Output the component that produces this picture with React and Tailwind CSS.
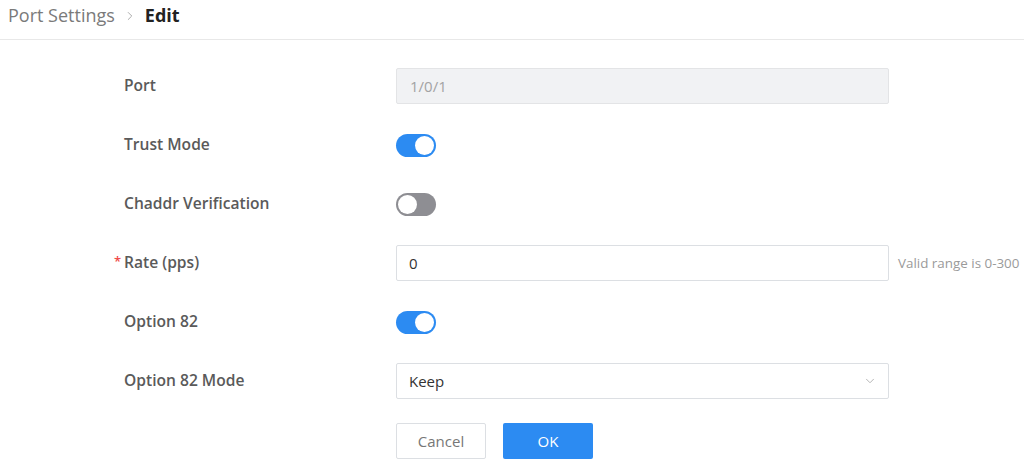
import React from 'react';
import { ChevronRight, ChevronDown } from 'lucide-react';

const Toggle = ({ on }) => (
  <div className={`w-[40px] h-[23px] rounded-full flex items-center px-[2px] ${on ? 'bg-[#2c8bf2] justify-end' : 'bg-[#8e8e93] justify-start'}`}>
    <div className="w-[19px] h-[19px] rounded-full bg-white"></div>
  </div>
);

const Row = ({ label, required, children, hint }) => (
  <div className="flex items-center h-[36px]">
    <div className="w-[272px] relative text-[15.6px] font-semibold text-[#5a5a5a]">
      {required && <span className="absolute -left-[10px] top-[4px] text-[#f04b4b] text-[13px] leading-none">*</span>}
      {label}
    </div>
    <div className="w-[493px]">{children}</div>
    {hint && <div className="ml-[9px] text-[13.4px] text-[#9a9a9a]">{hint}</div>}
  </div>
);

const App = () => {
  return (
    <div className="w-[1024px] h-[474px] bg-white overflow-hidden font-['Open_Sans',sans-serif]">
      <div className="h-[40px] border-b border-[#e8e8e8] flex items-center pl-[8px] pb-[8px]">
        <span className="text-[18px] text-[#7a7a7a]">Port Settings</span>
        <ChevronRight size={14} className="text-[#a0a0a0] mx-[8px]" strokeWidth={1.5} />
        <span className="text-[18px] font-bold text-[#222]">Edit</span>
      </div>

      <div className="pl-[124px] pt-[28px] flex flex-col gap-[23px]">
        <Row label="Port">
          <div className="h-[36px] bg-[#f1f2f4] border border-[#e3e4e6] rounded-[2px] flex items-center px-[13px] text-[15px] text-[#a3a3a3]">1/0/1</div>
        </Row>
        <Row label="Trust Mode">
          <Toggle on />
        </Row>
        <Row label="Chaddr Verification">
          <Toggle />
        </Row>
        <Row label="Rate (pps)" required hint="Valid range is 0-300">
          <div className="h-[36px] bg-white border border-[#dcdfe3] rounded-[2px] flex items-center px-[12px] text-[15px] text-[#333]">0</div>
        </Row>
        <Row label="Option 82">
          <Toggle on />
        </Row>
        <Row label="Option 82 Mode">
          <div className="h-[36px] bg-white border border-[#dcdfe3] rounded-[2px] flex items-center justify-between pl-[12px] pr-[11px] text-[15px] text-[#333]">
            <span>Keep</span>
            <ChevronDown size={14} className="text-[#aaa]" strokeWidth={1.5} />
          </div>
        </Row>
        <div className="flex pl-[272px] gap-[17px] mt-[1px]">
          <button className="w-[90px] h-[36px] border border-[#dcdfe3] rounded-[2px] bg-white text-[15px] text-[#777]">Cancel</button>
          <button className="w-[90px] h-[36px] rounded-[2px] bg-[#2c8bf2] text-[15px] text-white">OK</button>
        </div>
      </div>
    </div>
  );
};

export default App;
